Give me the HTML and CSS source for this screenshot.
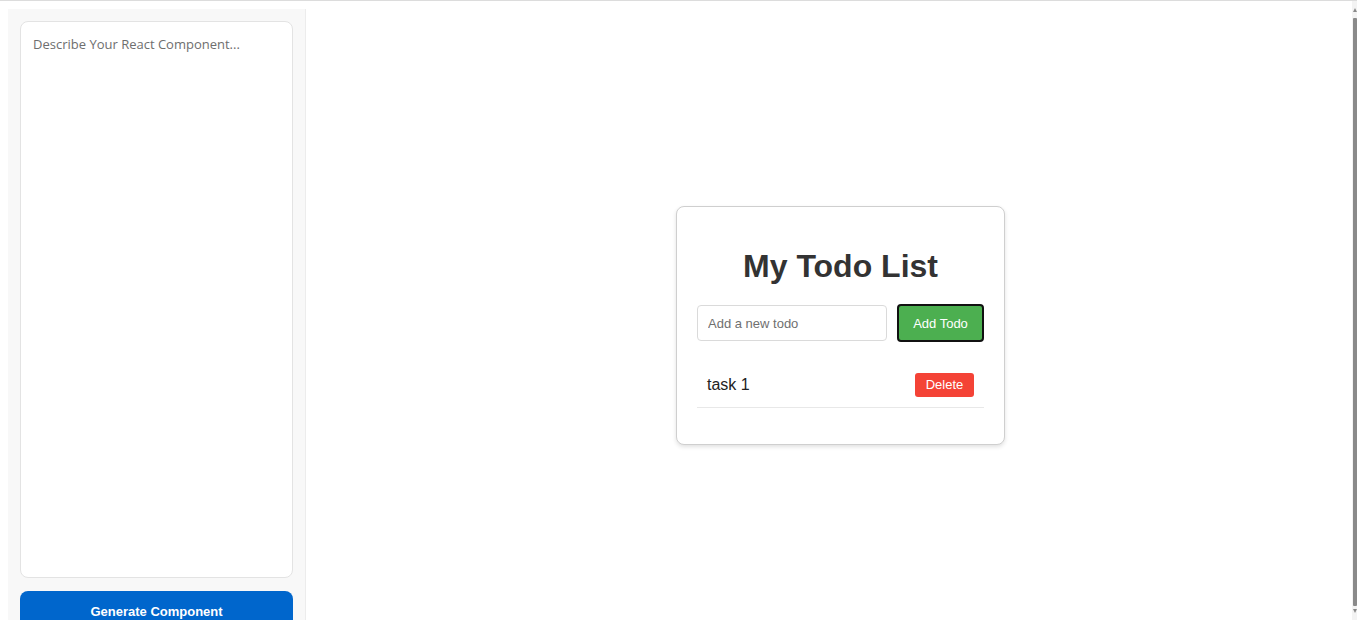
FILE: index.html
```html
<!DOCTYPE html>
<html lang="en">
<head>
<meta charset="utf-8">
<title>React Component Generator</title>
<link rel="stylesheet" href="styles.css">
</head>
<body>
<div class="app">
  <aside class="sidebar">
    <textarea class="prompt" placeholder="Describe Your React Component..."></textarea>
    <button class="generate">Generate Component</button>
  </aside>
  <main class="preview">
    <div class="todo-card">
      <h1 class="todo-title">My Todo List</h1>
      <div class="todo-form">
        <input class="todo-input" type="text" placeholder="Add a new todo">
        <button class="add-btn">Add Todo</button>
      </div>
      <ul class="todo-list">
        <li class="todo-item">
          <span class="todo-text">task 1</span>
          <button class="delete-btn">Delete</button>
        </li>
      </ul>
    </div>
  </main>
</div>
<div class="scrollbar">
  <span class="arrow-up"></span>
  <span class="thumb"></span>
  <span class="arrow-down"></span>
</div>
</body>
</html>
```
FILE: styles.css
```css
html, body {
  margin: 0;
  height: 100%;
  overflow: hidden;
}
body {
  border-top: 1px solid #dcdcdc;
  padding: 8px 8px 8px 8px;
  box-sizing: border-box;
  background: #fff;
  font-family: "Liberation Sans", Arial, sans-serif;
}
.app {
  display: flex;
  height: 633px;
}
.sidebar {
  width: 273px;
  flex: none;
  padding: 12px 12px 12px 12px;
  background: #f8f8f8;
  border-right: 1px solid #ececec;
  display: flex;
  flex-direction: column;
  gap: 13px;
}
.prompt {
  flex: none;
  height: 557px;
  box-sizing: border-box;
  border: 1px solid #e3e3e3;
  border-radius: 8px;
  padding: 13px 12px;
  resize: none;
  background: #fff;
  font-family: "Open Sans", "Noto Sans", sans-serif;
  font-size: 13px;
  color: #333;
  outline: none;
}
.prompt::placeholder {
  color: #6e6e6e;
}
.generate {
  flex: none;
  height: 40px;
  border: none;
  border-radius: 8px;
  background: #0066cc;
  color: #fff;
  font-family: "Liberation Sans", Arial, sans-serif;
  font-weight: bold;
  font-size: 13px;
  padding: 0;
}
.preview {
  flex: 1;
  display: flex;
  align-items: center;
  justify-content: center;
  padding-left: 26px;
}
.todo-card {
  width: 287px;
  padding: 20px;
  border: 1px solid #cfcfcf;
  border-radius: 8px;
  box-shadow: 0 2px 4px rgba(0, 0, 0, 0.12);
  background: #fff;
}
.todo-title {
  margin: 21px 0 19px;
  text-align: center;
  font-size: 32px;
  font-weight: bold;
  color: #333;
  line-height: 37px;
}
.todo-form {
  display: flex;
  gap: 10px;
  align-items: center;
}
.todo-input {
  width: 190px;
  height: 36px;
  box-sizing: border-box;
  border: 1px solid #dadada;
  border-radius: 4px;
  padding: 0 10px;
  font-family: "Liberation Sans", Arial, sans-serif;
  font-size: 13px;
  outline: none;
}
.todo-input::placeholder {
  color: #6f6f6f;
}
.add-btn {
  width: 87px;
  height: 38px;
  box-sizing: border-box;
  border: 2px solid #111;
  border-radius: 4px;
  background: #4caf50;
  color: #fff;
  font-family: "Liberation Sans", Arial, sans-serif;
  font-size: 13px;
  padding: 0;
}
.todo-list {
  list-style: none;
  margin: 20px 0 16px;
  padding: 0;
}
.todo-item {
  display: flex;
  justify-content: space-between;
  align-items: center;
  padding: 10px 10px;
  height: 25px;
  border-bottom: 1px solid #e8e8e8;
}
.todo-text {
  font-size: 16px;
  color: #222;
}
.delete-btn {
  width: 59px;
  height: 24px;
  border: none;
  border-radius: 3px;
  background: #f44336;
  color: #fff;
  font-family: "Liberation Sans", Arial, sans-serif;
  font-size: 13px;
  padding: 0;
}
.scrollbar {
  position: fixed;
  top: 1px;
  right: 0;
  width: 5px;
  height: 619px;
  background: #f3f3f3;
}
.thumb {
  position: absolute;
  left: 1px;
  top: 17px;
  width: 4px;
  height: 588px;
  background: #8a8a8a;
  border-radius: 1px;
}
.arrow-up {
  position: absolute;
  top: 7px;
  left: 1px;
  width: 0;
  height: 0;
  border-left: 2px solid transparent;
  border-right: 2px solid transparent;
  border-bottom: 4px solid #8a8a8a;
}
.arrow-down {
  position: absolute;
  bottom: 7px;
  left: 1px;
  width: 0;
  height: 0;
  border-left: 2px solid transparent;
  border-right: 2px solid transparent;
  border-top: 4px solid #8a8a8a;
}
```
